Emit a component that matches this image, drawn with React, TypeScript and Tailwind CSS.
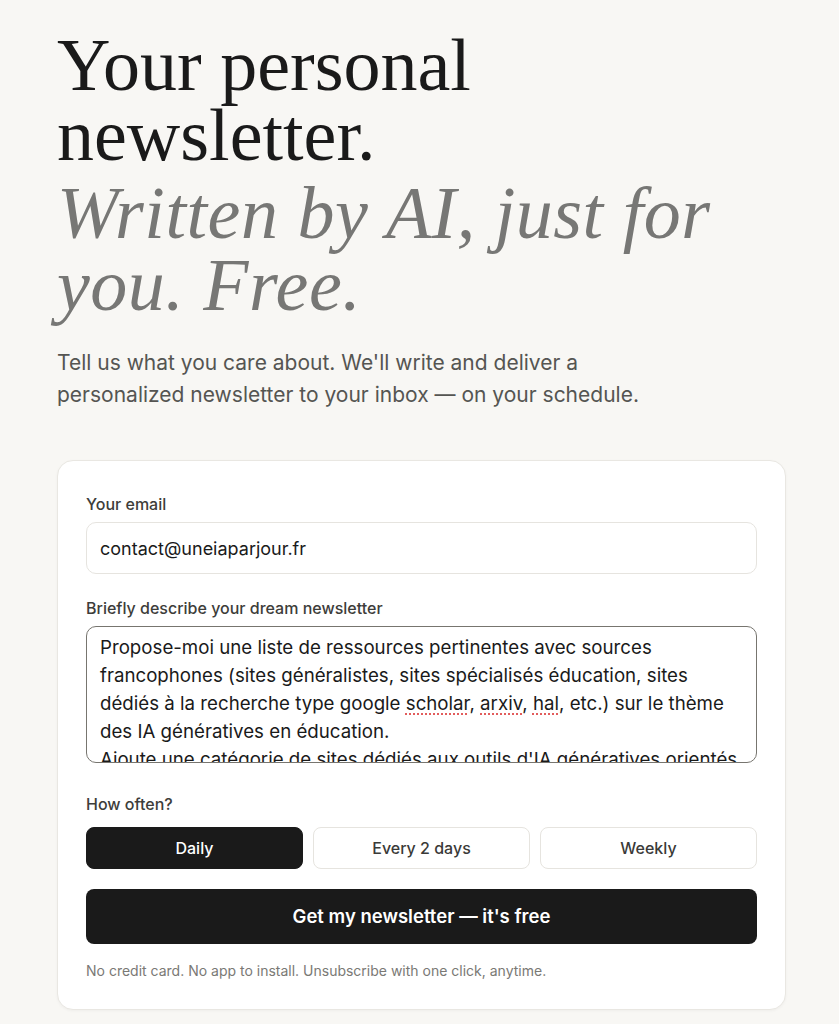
import { useState } from 'react';

const FREQUENCIES = ['Daily', 'Every 2 days', 'Weekly'] as const;
type Frequency = (typeof FREQUENCIES)[number];

const serif = { fontFamily: '"Liberation Serif", "Times New Roman", serif' };

function FieldLabel({ children }: { children: React.ReactNode }) {
  return (
    <label className="block text-[16px] leading-5 font-medium text-[#3d3d3a] mb-2">
      {children}
    </label>
  );
}

// words flagged by the browser spell checker
function Flagged({ children }: { children: React.ReactNode }) {
  return (
    <span className="underline decoration-dotted decoration-[#e05252] underline-offset-[4px]">
      {children}
    </span>
  );
}

export default function App() {
  const [frequency, setFrequency] = useState<Frequency>('Daily');

  return (
    <div
      className="min-h-screen bg-[#f8f7f4] text-[#1a1a1a] pl-[57px] pr-[53px] pt-[30px] pb-10"
      style={{ fontFamily: 'Inter, "Noto Sans", sans-serif' }}
    >
      {/* Hero */}
      <h1 className="max-w-[680px] text-[74px] font-normal" style={serif}>
        <span className="block leading-[70px] text-[#1a1a1a]">Your personal newsletter.</span>
        <span className="block mt-[7px] leading-[72px] italic tracking-[0.5px] text-[#777775]">
          Written by AI, just for you. Free.
        </span>
      </h1>

      <p className="mt-[26px] max-w-[610px] text-[21px] leading-8 text-[#555552]">
        Tell us what you care about. We'll write and deliver a personalized newsletter to your
        inbox — on your schedule.
      </p>

      {/* Signup card */}
      <form
        className="mt-[49px] bg-white border border-[#e9e7e2] rounded-2xl shadow-[0_1px_3px_rgba(0,0,0,0.04)] pt-[33px] px-7 pb-[30px]"
        onSubmit={(e) => e.preventDefault()}
      >
        <FieldLabel>Your email</FieldLabel>
        <input
          type="email"
          defaultValue="contact@uneiaparjour.fr"
          className="block w-full h-[52px] rounded-[10px] border border-[#e6e4df] bg-white px-[13px] text-[18px] text-[#1a1a1a] outline-none"
        />

        <div className="mt-6">
          <FieldLabel>Briefly describe your dream newsletter</FieldLabel>
          <div className="h-[137px] overflow-hidden rounded-[10px] border border-[#77756f] pl-[13px] pr-[8px] pt-[7px] text-[18.7px] leading-7 text-[#1a1a1a]">
            <p>
              Propose-moi une liste de ressources pertinentes avec sources francophones (sites
              généralistes, sites spécialisés éducation, sites dédiés à la recherche type google{' '}
              <Flagged>scholar</Flagged>, <Flagged>arxiv</Flagged>, <Flagged>hal</Flagged>, etc.)
              sur le thème des IA génératives en éducation.
            </p>
            <p>
              Ajoute une catégorie de sites dédiés aux outils d'IA génératives orientés éducation.
            </p>
          </div>
        </div>

        <div className="mt-[31px]">
          <FieldLabel>How often?</FieldLabel>
          <div className="mt-[13px] grid grid-cols-3 gap-[10px]">
            {FREQUENCIES.map((f) => (
              <button
                key={f}
                type="button"
                onClick={() => setFrequency(f)}
                className={
                  frequency === f
                    ? 'h-[42px] rounded-lg bg-[#1a1a1a] border border-[#1a1a1a] text-white text-[16px] font-medium'
                    : 'h-[42px] rounded-lg bg-white border border-[#e6e4df] text-[#3a3a38] text-[16px] font-medium'
                }
              >
                {f}
              </button>
            ))}
          </div>
        </div>

        <button
          type="submit"
          className="mt-5 w-full h-[55px] rounded-lg bg-[#1a1a1a] text-white text-[18.5px] font-semibold"
        >
          Get my newsletter — it's free
        </button>

        <p className="mt-[19px] text-[14px] leading-4 text-[#7a7975]">
          No credit card. No app to install. Unsubscribe with one click, anytime.
        </p>
      </form>
    </div>
  );
}
